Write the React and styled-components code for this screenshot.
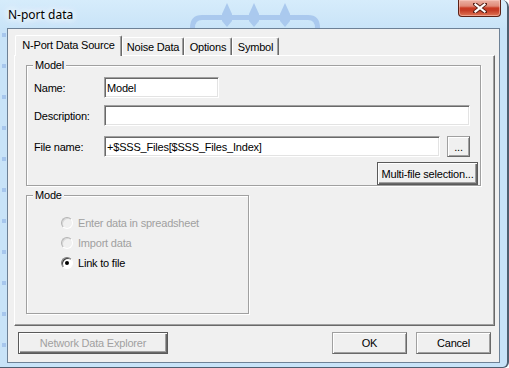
import React from 'react';
import styled, { createGlobalStyle, css } from 'styled-components';

const GlobalStyle = createGlobalStyle`
  html, body {
    margin: 0;
    padding: 0;
    background: #ffffff;
  }
  body {
    width: 509px;
    height: 368px;
    overflow: hidden;
  }
`;

const Window = styled.div`
  position: relative;
  width: 509px;
  height: 368px;
  box-sizing: border-box;
  display: flex;
  flex-direction: column;
  background: #c8e3f8;
  border-right: 2px solid #4f5f70;
  border-bottom: 1px solid #4f5f70;
  border-radius: 0 7px 6px 0;
  font-family: "Liberation Sans", Arial, sans-serif;
  font-size: 11px;
  letter-spacing: -0.2px;
  color: #000;
  overflow: hidden;

  &::before {
    content: '';
    position: absolute;
    top: 28px;
    left: 0;
    right: 0;
    bottom: 0;
    background: repeating-linear-gradient(to bottom, transparent 0 5px, #a6c6ed 5px 9px, transparent 9px 31px);
    -webkit-mask-image: repeating-linear-gradient(to right, transparent 0 2px, #000 2px 6px, transparent 6px 29px);
    mask-image: repeating-linear-gradient(to right, transparent 0 2px, #000 2px 6px, transparent 6px 29px);
  }
`;

const TitleBar = styled.div`
  position: relative;
  flex: none;
  height: 28px;
  display: flex;
  align-items: flex-start;
  background: linear-gradient(#d6ecfb, #c9e4f8);
`;

const Decoration = styled.svg`
  position: absolute;
  left: 185px;
  top: 0;
`;

const Title = styled.div`
  position: relative;
  margin: 7px 0 0 8px;
  font-family: "Noto Sans", "Open Sans", sans-serif;
  font-size: 12px;
  line-height: 16px;
  letter-spacing: 0;
  color: #000;
  text-shadow: 0 0 6px #fff, 0 0 10px #fff, 0 0 12px #fff;
`;

const CloseButton = styled.div`
  position: relative;
  margin-left: auto;
  margin-right: 6px;
  width: 43px;
  height: 17px;
  box-sizing: border-box;
  border: 1px solid #5c2116;
  border-top: none;
  border-radius: 0 0 4px 4px;
  background: linear-gradient(#ecb2a4 0%, #e08a78 38%, #c93a22 50%, #c53c25 65%, #df7656 100%);
  box-shadow: inset 0 0 0 1px rgba(255, 210, 200, 0.5);
  display: flex;
  align-items: center;
  justify-content: center;
`;

const Client = styled.div`
  position: relative;
  z-index: 1;
  flex: none;
  margin-left: 7px;
  width: 493px;
  height: 335px;
  box-sizing: border-box;
  border: 1px solid #6d8196;
  background: #f0f0f0;
  display: flex;
  flex-direction: column;
`;

const TabStrip = styled.div`
  position: relative;
  z-index: 2;
  display: flex;
  align-items: flex-end;
  height: 20px;
  margin: 6px 0 0 7px;
`;

const Tab = styled.div`
  position: relative;
  box-sizing: border-box;
  width: ${p => p.$w}px;
  height: ${p => (p.$active ? 21 : 18)}px;
  margin-bottom: ${p => (p.$active ? -1 : 0)}px;
  border-top: 1px solid #fff;
  border-left: 1px solid #fff;
  border-right: 1px solid #696969;
  border-radius: 2px 2px 0 0;
  box-shadow: inset -1px 0 #a0a0a0;
  background: #f0f0f0;
  display: flex;
  align-items: center;
  justify-content: center;
  padding-bottom: ${p => (p.$active ? 2 : 0)}px;
  white-space: nowrap;
  z-index: ${p => (p.$active ? 2 : 1)};
`;

const Panel = styled.div`
  margin-left: 6px;
  width: 481px;
  height: 271px;
  box-sizing: border-box;
  border: 1px solid;
  border-color: #fff #696969 #696969 #fff;
  box-shadow: inset -1px -1px #a0a0a0;
  padding: 9px 0 0 11px;
  display: flex;
  flex-direction: column;
  gap: 9px;
`;

const Group = styled.div`
  position: relative;
  box-sizing: border-box;
  width: ${p => p.$w}px;
  height: ${p => p.$h}px;
  border: 1px solid #a0a0a0;
  box-shadow: inset 1px 1px #fff, 1px 1px #fff;
  display: flex;
  flex-direction: column;
  padding: ${p => p.$pad};
`;

const Legend = styled.span`
  position: absolute;
  top: -7px;
  left: 6px;
  padding: 0 2px;
  line-height: 13px;
  background: #f0f0f0;
`;

const Field = styled.div`
  display: flex;
  align-items: center;
  margin-top: ${p => p.$gap || 0}px;
`;

const Label = styled.label`
  flex: none;
  width: 70px;
`;

const TextBox = styled.input`
  box-sizing: border-box;
  height: 21px;
  margin: 0;
  padding: 0 2px;
  font: inherit;
  letter-spacing: inherit;
  color: #000;
  background: #fff;
  outline: none;
  border: 1px solid;
  border-color: #a0a0a0 #fff #fff #a0a0a0;
  box-shadow: inset 1px 1px #696969, inset -1px -1px #e3e3e3;
  ${p => (p.$w ? css`width: ${p.$w}px; flex: none;` : css`flex: 1; min-width: 0;`)}
`;

const Button = styled.div`
  box-sizing: border-box;
  flex: none;
  width: ${p => p.$w}px;
  height: ${p => p.$h || 22}px;
  margin-left: ${p => p.$ml || 0}px;
  display: flex;
  align-items: center;
  justify-content: center;
  background: #f0f0f0;
  color: ${p => (p.$disabled ? '#a0a0a0' : '#000')};
  white-space: nowrap;
  ${p =>
    p.$strong
      ? css`
          border: 1px solid #5a5a5a;
          box-shadow: inset 1px 1px #fff, inset -1px -1px #696969, inset -2px -2px #a0a0a0;
        `
      : css`
          border: 1px solid;
          border-color: #a0a0a0 #696969 #696969 #a0a0a0;
          box-shadow: inset 1px 1px #fff, inset -1px -1px #a0a0a0;
        `}
`;

const MultiRow = styled.div`
  display: flex;
  justify-content: flex-end;
  margin: 5px -8px 0 0;
`;

const RadioList = styled.div`
  display: flex;
  flex-direction: column;
`;

const RadioRow = styled.div`
  display: flex;
  align-items: center;
  gap: 5px;
  height: 20px;
  color: ${p => (p.$disabled ? '#a0a0a0' : '#000')};
`;

const RadioDot = styled.span`
  position: relative;
  flex: none;
  width: 12px;
  height: 12px;
  box-sizing: border-box;
  border-radius: 50%;
  border: 1px solid;
  border-color: ${p => (p.$disabled ? '#b4b4b4 #fff #fff #b4b4b4' : '#7a7a7a #fff #fff #7a7a7a')};
  background: ${p => (p.$disabled ? '#f0f0f0' : '#fff')};
  box-shadow: ${p => (p.$disabled ? 'inset 1px 1px #d8d8d8' : 'inset 1px 1px #404040')};

  ${p =>
    p.$checked &&
    css`
      &::after {
        content: '';
        position: absolute;
        left: 3px;
        top: 3px;
        width: 4px;
        height: 4px;
        border-radius: 50%;
        background: #000;
      }
    `}
`;

const ButtonRow = styled.div`
  display: flex;
  align-items: center;
  margin-top: 6px;
  padding: 0 8px 0 10px;
  gap: 9px;
`;

const Spacer = styled.div`
  flex: 1;
`;

function CloseGlyph() {
  return (
    <svg width="14" height="10" viewBox="0 0 14 10">
      <path d="M2 1 L12 9 M12 1 L2 9" stroke="#5a2218" strokeWidth="4" strokeLinecap="square" />
      <path d="M2.5 1.5 L11.5 8.5 M11.5 1.5 L2.5 8.5" stroke="#fff" strokeWidth="2.2" strokeLinecap="square" />
    </svg>
  );
}

function TitleArt() {
  return (
    <Decoration width="140" height="28" viewBox="0 0 140 28">
      <g fill="#aac9ee" stroke="none">
        <path d="M5 28 Q5 15 17 15 H123 Q135 15 135 28 H130 Q130 20 123 20 H17 Q10 20 10 28 Z" />
        <path d="M42 3 L47 14 L47 21 L42 27 L37 21 L37 14 Z" />
        <path d="M69 3 L74 14 L74 21 L69 27 L64 21 L64 14 Z" />
        <path d="M100 3 L105 14 L105 21 L100 27 L95 21 L95 14 Z" />
      </g>
    </Decoration>
  );
}

function Radio({ checked, disabled, children }) {
  return (
    <RadioRow $disabled={disabled}>
      <RadioDot $checked={checked} $disabled={disabled} />
      {children}
    </RadioRow>
  );
}

export default function App() {
  return (
    <>
      <GlobalStyle />
      <Window>
        <TitleBar>
          <TitleArt />
          <Title>N-port data</Title>
          <CloseButton>
            <CloseGlyph />
          </CloseButton>
        </TitleBar>
        <Client>
          <TabStrip>
            <Tab $w={107} $active>N-Port Data Source</Tab>
            <Tab $w={62}>Noise Data</Tab>
            <Tab $w={48}>Options</Tab>
            <Tab $w={47}>Symbol</Tab>
          </TabStrip>
          <Panel>
            <Group $w={455} $h={121} $pad="11px 10px 0 7px">
              <Legend>Model</Legend>
              <Field>
                <Label>Name:</Label>
                <TextBox $w={115} defaultValue="Model" />
              </Field>
              <Field $gap={7}>
                <Label>Description:</Label>
                <TextBox defaultValue="" />
              </Field>
              <Field $gap={10}>
                <Label>File name:</Label>
                <TextBox defaultValue="+$SSS_Files[$SSS_Files_Index]" />
                <Button $w={23} $h={21} $ml={7}>...</Button>
              </Field>
              <MultiRow>
                <Button $w={101} $h={23} $strong>Multi-file selection...</Button>
              </MultiRow>
            </Group>
            <Group $w={223} $h={119} $pad="17px 0 0 34px">
              <Legend>Mode</Legend>
              <RadioList>
                <Radio disabled>Enter data in spreadsheet</Radio>
                <Radio disabled>Import data</Radio>
                <Radio checked>Link to file</Radio>
              </RadioList>
            </Group>
          </Panel>
          <ButtonRow>
            <Button $w={150} $strong $disabled>Network Data Explorer</Button>
            <Spacer />
            <Button $w={75}>OK</Button>
            <Button $w={75}>Cancel</Button>
          </ButtonRow>
        </Client>
      </Window>
    </>
  );
}
